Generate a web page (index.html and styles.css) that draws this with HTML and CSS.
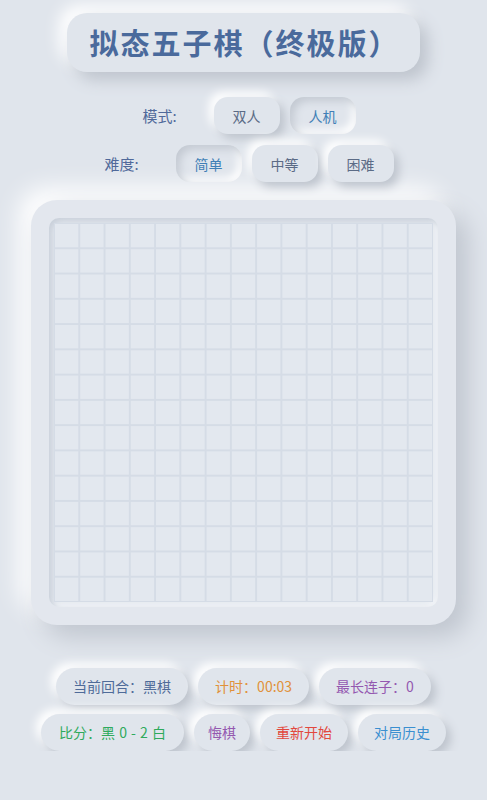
FILE: index.html
```html
<!DOCTYPE html>
<html lang="zh-CN">
<head>
  <meta charset="UTF-8" />
  <title>拟态五子棋（终极版）</title>
  <link rel="stylesheet" href="styles.css">
</head>
<body>

<h1 class="title">拟态五子棋（终极版）</h1>

<div class="row">
  <span class="label">模式:</span>
  <button class="opt">双人</button>
  <button class="opt active">人机</button>
</div>
<div class="row">
  <span class="label">难度:</span>
  <button class="opt active">简单</button>
  <button class="opt">中等</button>
  <button class="opt">困难</button>
</div>

<div class="board">
  <div class="board-inner">
    <div class="grid"></div>
  </div>
</div>

<div class="status">
  <span class="pill turn">当前回合：黑棋</span>
  <span class="pill timer">计时：00:03</span>
  <span class="pill longest">最长连子：0</span>
</div>
<div class="status">
  <span class="pill score">比分：黑 0 - 2 白</span>
  <button class="pill act undo">悔棋</button>
  <button class="pill act restart">重新开始</button>
  <button class="pill act history">对局历史</button>
</div>

</body>
</html>
```

FILE: styles.css
```css
body {
  margin: 0;
  padding: 13px 0 0;
  background: #e0e5ec;
  font-family: "Noto Sans CJK SC", "Noto Sans", sans-serif;
  text-align: center;
}

button {
  font-family: inherit;
  border: none;
  cursor: pointer;
}

.title {
  display: inline-block;
  margin: 0;
  padding: 9px 20px 10px 22px;
  font-size: 29px;
  line-height: 40px;
  font-weight: bold;
  letter-spacing: 2px;
  color: #4a6a9c;
  background: #e0e5ec;
  border-radius: 20px;
  box-shadow: 8px 8px 16px #bec4cd, -8px -8px 16px #ffffff;
}

.row {
  display: flex;
  justify-content: center;
  align-items: center;
  gap: 10px;
  padding-left: 11px;
  margin-top: 11px;
}

.title + .row {
  margin-top: 25px;
}

.label {
  font-size: 15px;
  color: #50699a;
  margin-right: 27px;
}

.opt {
  height: 37px;
  padding: 0 19px;
  font-size: 14px;
  color: #5b6b86;
  background: #e0e5ec;
  border-radius: 14px;
  box-shadow: 5px 5px 10px #bec4cd, -5px -5px 10px #ffffff;
}

.opt.active {
  color: #3f7fb6;
  box-shadow: inset 4px 4px 8px #c3c9d2, inset -4px -4px 8px #ffffff;
}

.board {
  width: 425px;
  height: 425px;
  box-sizing: border-box;
  margin: 18px auto 0;
  padding: 18px;
  background: #e3e7ee;
  border-radius: 26px;
  box-shadow: 12px 12px 24px #c0c6cf, -12px -12px 24px #ffffff;
}

.board-inner {
  height: 100%;
  box-sizing: border-box;
  padding: 5px;
  background: #e2e7ee;
  border-radius: 10px;
  box-shadow: inset 3px 3px 6px #c8cfd9, inset -3px -3px 6px #f4f6f9;
}

.grid {
  height: 100%;
  background-color: #e3e8ef;
  background-image:
    linear-gradient(to right, #d5dce6 0 1px, transparent 1px calc(100% - 1px), #d5dce6 calc(100% - 1px)),
    linear-gradient(to bottom, #d5dce6 0 1px, transparent 1px calc(100% - 1px), #d5dce6 calc(100% - 1px));
  background-size: calc(100% / 15) calc(100% / 15);
}

.status {
  display: flex;
  justify-content: center;
  gap: 10px;
  margin-top: 43px;
}

.status + .status {
  margin-top: 9px;
}

.pill {
  height: 37px;
  line-height: 37px;
  padding: 0 17px;
  font-size: 14px;
  background: #e0e5ec;
  border-radius: 19px;
  box-shadow: 5px 5px 10px #bec4cd, -5px -5px 10px #ffffff;
}

.pill.act {
  padding: 0 16px;
}

.pill.score {
  padding: 0 18px;
  word-spacing: 1px;
}

.pill.undo {
  padding: 0 14px;
}

.turn { color: #4f6b99; }
.timer { color: #e0913a; }
.longest { color: #9458b0; }
.score { color: #2faa5c; }
.undo { color: #9458b0; }
.restart { color: #e2483d; }
.history { color: #3a8fd0; }
```
